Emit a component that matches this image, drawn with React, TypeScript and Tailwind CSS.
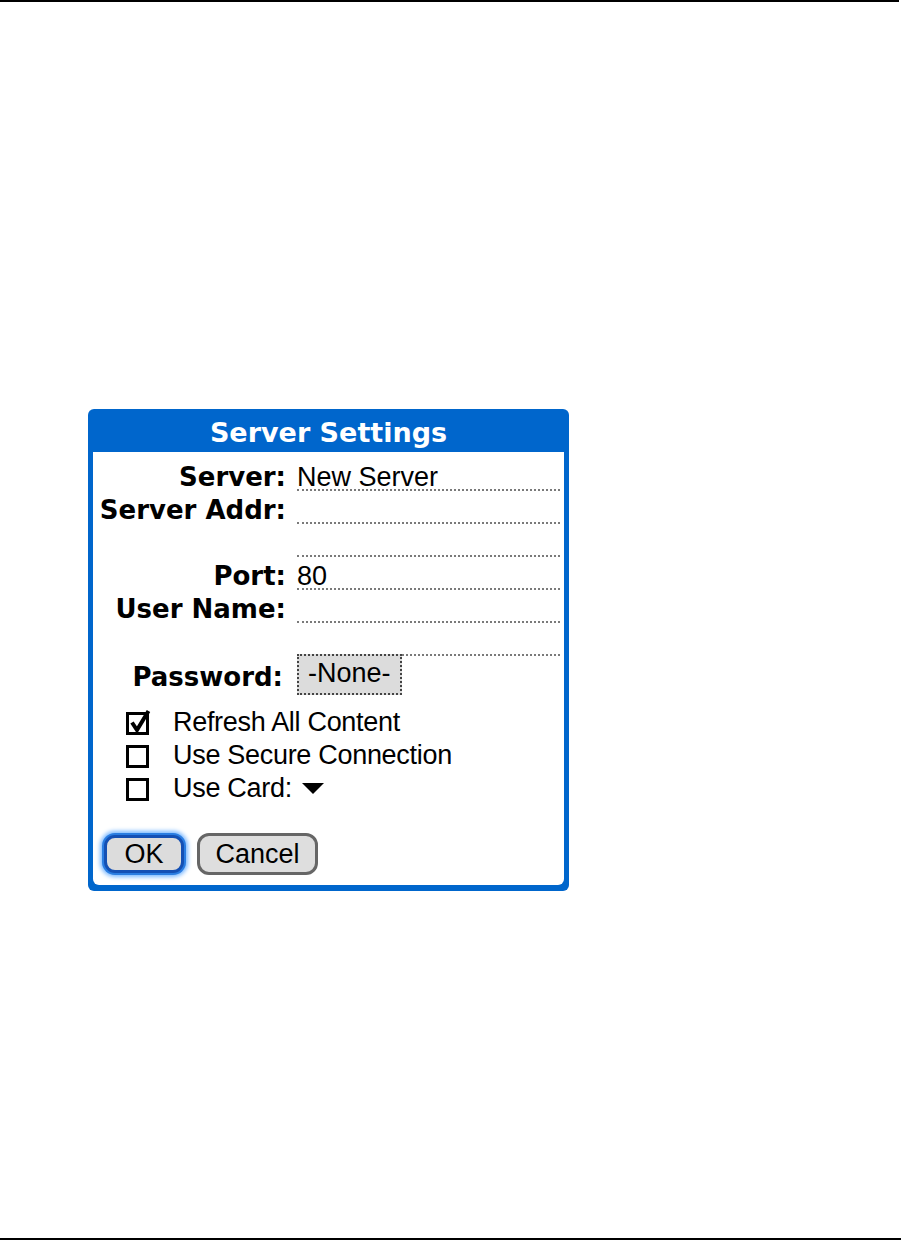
const label = "font-['DejaVu_Sans',sans-serif] font-bold text-[26px] text-black whitespace-nowrap";
const body = "font-['Liberation_Sans',Arial,sans-serif] text-[27px] text-black whitespace-nowrap";

function FieldRow({ name, value }: { name?: string; value?: string }) {
  return (
    <div className="flex h-[33px] items-end">
      <div className={`w-[193px] border-b-2 border-transparent text-right leading-[24px] ${label}`}>{name}</div>
      <div className={`ml-[11px] mr-[4px] flex-1 border-b-2 border-dotted border-[#7a7a7a] leading-[24px] ${body}`}>
        {value}
      </div>
    </div>
  );
}

function CheckBox({ checked }: { checked?: boolean }) {
  return (
    <svg width="26" height="27" viewBox="0 0 26 27" className="-mt-[4px] -mr-[2px] shrink-0">
      <rect x="1.5" y="5.5" width="20" height="20" fill="none" stroke="#000" strokeWidth="3" />
      {checked && <path d="M6 14.5 L11 22 L22.5 3" fill="none" stroke="#000" strokeWidth="4" strokeLinejoin="miter" />}
    </svg>
  );
}

function CheckRow({ text, checked, menu }: { text: string; checked?: boolean; menu?: boolean }) {
  return (
    <div className="flex h-[33px] items-start pl-[33px]">
      <div className="mt-[6px] flex">
        <CheckBox checked={checked} />
      </div>
      <span className={`ml-[23px] leading-[33px] tracking-[-0.3px] ${body}`}>{text}</span>
      {menu && (
        <svg width="22" height="11" viewBox="0 0 22 11" className="ml-[10px] mt-[11px]">
          <path d="M0 0 H22 L11 11 Z" fill="#000" />
        </svg>
      )}
    </div>
  );
}

export default function App() {
  return (
    <div className="flex h-[1241px] w-[901px] flex-col bg-white">
      <div className="h-[2px] w-[899px] bg-black" />

      <div className="ml-[88px] mt-[407px] flex h-[482px] w-[481px] flex-col rounded-[6px] bg-[#0066cc]">
        <div className="h-[43px] pt-[5px] text-center font-['DejaVu_Sans',sans-serif] text-[27px] font-bold leading-[38px] text-white">
          Server Settings
        </div>
        <div className="mx-[5px] mb-[6px] flex flex-1 flex-col rounded-b-[6px] bg-white pt-[6px]">
          <FieldRow name="Server:" value="New Server" />
          <FieldRow name="Server Addr:" />
          <FieldRow />
          <FieldRow name="Port:" value="80" />
          <FieldRow name="User Name:" />
          <FieldRow />

          <div className="-mt-[2px] flex items-start">
            <div className={`w-[190px] pt-[7px] text-right leading-[33px] ${label}`}>Password:</div>
            <div className={`ml-[14px] h-[41px] border-2 border-dotted border-[#444] bg-[#dcdcdc] px-[9px] leading-[35px] ${body}`}>
              -None-
            </div>
          </div>

          <div className="mt-[11px] flex flex-col">
            <CheckRow text="Refresh All Content" checked />
            <CheckRow text="Use Secure Connection" />
            <CheckRow text="Use Card:" menu />
          </div>

          <div className="ml-[11px] mt-[28px] flex h-[42px] items-center">
            <button className={`flex h-[38px] w-[80px] items-center justify-center rounded-[11px] border-[3px] border-[#1450b4] bg-[#dcdcdc] shadow-[0_0_0_2px_#2a7de1,0_0_4px_4px_#7ab8ff] leading-none ${body}`}>
              OK
            </button>
            <button className={`ml-[13px] flex h-[42px] w-[121px] items-center justify-center rounded-[12px] border-[3px] border-[#666] bg-[#dedede] leading-none ${body}`}>
              Cancel
            </button>
          </div>
        </div>
      </div>

      <div className="flex-1" />
      <div className="mb-[1px] h-[2px] w-[901px] bg-black" />
    </div>
  );
}
